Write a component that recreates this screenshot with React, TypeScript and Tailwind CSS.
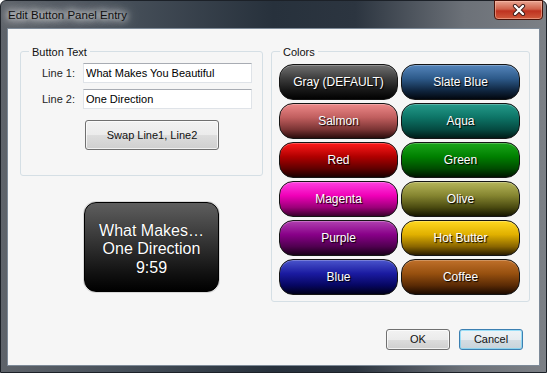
const colors = [
  { name: "Gray (DEFAULT)", bg: "bg-[linear-gradient(to_bottom,#707070,#3c3c3c_40%,#161616_75%,#020202)]" },
  { name: "Slate Blue", bg: "bg-[linear-gradient(to_bottom,#5585bb,#2d5a8a_40%,#102640_75%,#02070f)]" },
  { name: "Salmon", bg: "bg-[linear-gradient(to_bottom,#ec8888,#c05e5e_40%,#7a3434_75%,#2a0c0c)]" },
  { name: "Aqua", bg: "bg-[linear-gradient(to_bottom,#249a8a,#0d7466_40%,#054a41_75%,#011b17)]" },
  { name: "Red", bg: "bg-[linear-gradient(to_bottom,#ff1a1a,#b00000_40%,#600000_75%,#1a0000)]" },
  { name: "Green", bg: "bg-[linear-gradient(to_bottom,#1aa51a,#008000_40%,#004c00_75%,#001500)]" },
  { name: "Magenta", bg: "bg-[linear-gradient(to_bottom,#ff40e0,#f000b8_40%,#9a0078_75%,#3a002c)]" },
  { name: "Olive", bg: "bg-[linear-gradient(to_bottom,#b5b55a,#858530_40%,#4a4a10_75%,#151500)]" },
  { name: "Purple", bg: "bg-[linear-gradient(to_bottom,#b040b0,#880088_40%,#500050_75%,#180018)]" },
  { name: "Hot Butter", bg: "bg-[linear-gradient(to_bottom,#ffd820,#e0b000_40%,#8a6600_75%,#2a1c00)]" },
  { name: "Blue", bg: "bg-[linear-gradient(to_bottom,#4a55cc,#1a1aa0_40%,#060660_75%,#00001a)]" },
  { name: "Coffee", bg: "bg-[linear-gradient(to_bottom,#c0702a,#97500f_40%,#5a2a05_75%,#1c0a00)]" },
];

const ui = "font-['Liberation_Sans',Arial,sans-serif]";

function WinButton({ label, className = "" }: { label: string; className?: string }) {
  return (
    <button
      className={`flex items-center justify-center rounded-[3px] border border-[#707070] bg-[linear-gradient(to_bottom,#f2f2f2,#ebebeb_50%,#dddddd_51%,#cfcfcf)] text-[11px] text-[#111] shadow-[inset_0_0_0_1px_rgba(255,255,255,0.7)] ${className}`}
    >
      {label}
    </button>
  );
}

function TextRow({ label, value }: { label: string; value: string }) {
  return (
    <div className="flex items-center">
      <span className="w-[42px] pl-[21px] box-content text-[11px] text-[#1e1e1e]">{label}</span>
      <input
        readOnly
        value={value}
        className="ml-[-1px] h-[20px] w-[169px] border border-[#dfe3e8] border-t-[#a8acb3] bg-white px-[2px] text-[11px] text-black outline-none"
      />
    </div>
  );
}

export default function App() {
  return (
    <div className={`h-[376px] w-[548px] bg-white ${ui}`}>
      <div className="flex h-[373px] w-[547px] flex-col rounded-t-[6px] border border-[#1c2128] bg-[linear-gradient(to_right,#5e636a_0%,#47505a_22%,#27313c_50%,#2c3540_65%,#6c7178_85%,#7c8086_100%)] px-[6px] pb-[6px]">
        <div className="flex h-[27px] items-start justify-between">
          <span className="mt-[6px] pl-[1px] text-[11.5px] text-[#101010] [text-shadow:0_0_6px_#fff,0_0_10px_#fff,0_0_16px_rgba(255,255,255,0.9)]">
            Edit Button Panel Entry
          </span>
          <div className="mr-[-3px] mt-[-1px] flex h-[20px] w-[49px] items-center justify-center rounded-b-[4px] border border-[#4a1208] bg-[linear-gradient(to_bottom,#e9a592,#d0624a_45%,#bf3220_55%,#d05a3c)] shadow-[inset_0_0_0_1px_rgba(255,200,180,0.5)]">
            <svg width="14" height="12" viewBox="0 0 14 12">
              <path d="M3 2 L11 10 M11 2 L3 10" stroke="#3a1a18" strokeWidth="4.2" strokeLinecap="round" />
              <path d="M3 2 L11 10 M11 2 L3 10" stroke="#ffffff" strokeWidth="2.4" strokeLinecap="round" />
            </svg>
          </div>
        </div>

        <div className="flex flex-1 flex-col border border-[#7d8a98] bg-[#f6f6f6] pl-[12px] pt-[22px]">
          <div className="flex gap-[8px]">
            <div className="flex w-[243px] flex-col">
              <div className="relative h-[125px] w-[243px] rounded-[3px] border border-[#d5dfe5] pt-[11px]">
                <span className="absolute left-[8px] top-[-8px] bg-[#f6f6f6] px-[3px] text-[11px] text-[#111]">
                  Button Text
                </span>
                <div className="flex flex-col gap-[6px]">
                  <TextRow label="Line 1:" value="What Makes You Beautiful" />
                  <TextRow label="Line 2:" value="One Direction" />
                </div>
                <WinButton label="Swap Line1, Line2" className="ml-[64px] mt-[11px] h-[30px] w-[134px]" />
              </div>

              <div className="ml-[64px] mt-[26px] flex h-[90px] w-[135px] flex-col items-center justify-center rounded-[12px] border border-black bg-[linear-gradient(to_bottom,#5e5e5e,#333333_45%,#111111_80%,#000000)] pt-[5px] text-[16px] leading-[18.5px] text-white shadow-[0_0_0_1px_rgba(0,0,0,0.12)] [text-shadow:0_0_1px_rgba(0,0,0,0.8)]">
                <span>What Makes…</span>
                <span>One Direction</span>
                <span>9:59</span>
              </div>
            </div>

            <div className="relative h-[251px] w-[259px] rounded-[3px] border border-[#d5dfe5] pl-[7px] pt-[12px]">
              <span className="absolute left-[8px] top-[-8px] bg-[#f6f6f6] px-[3px] text-[11px] text-[#111]">
                Colors
              </span>
              <div className="grid grid-cols-[119px_119px] gap-[3px]">
                {colors.map((c) => (
                  <button
                    key={c.name}
                    className={`flex h-[36px] items-center justify-center rounded-[14px] border border-[#151515] text-[12px] text-white shadow-[inset_0_1px_0_rgba(255,255,255,0.25)] [text-shadow:1px_1px_1px_#000] ${c.bg}`}
                  >
                    {c.name}
                  </button>
                ))}
              </div>
            </div>
          </div>

          <div className="mt-[27px] flex justify-end gap-[9px] pr-[16px]">
            <WinButton label="OK" className="h-[21px] w-[64px]" />
            <button className="flex h-[21px] w-[64px] items-center justify-center rounded-[3px] border border-[#3c7fb1] bg-[linear-gradient(to_bottom,#eef3f6,#e6ecf0_50%,#d4dde3_51%,#c8d3da)] text-[11px] text-[#111] shadow-[inset_0_0_0_1px_rgba(100,210,250,0.6)]">
              Cancel
            </button>
          </div>
        </div>
      </div>
    </div>
  );
}
